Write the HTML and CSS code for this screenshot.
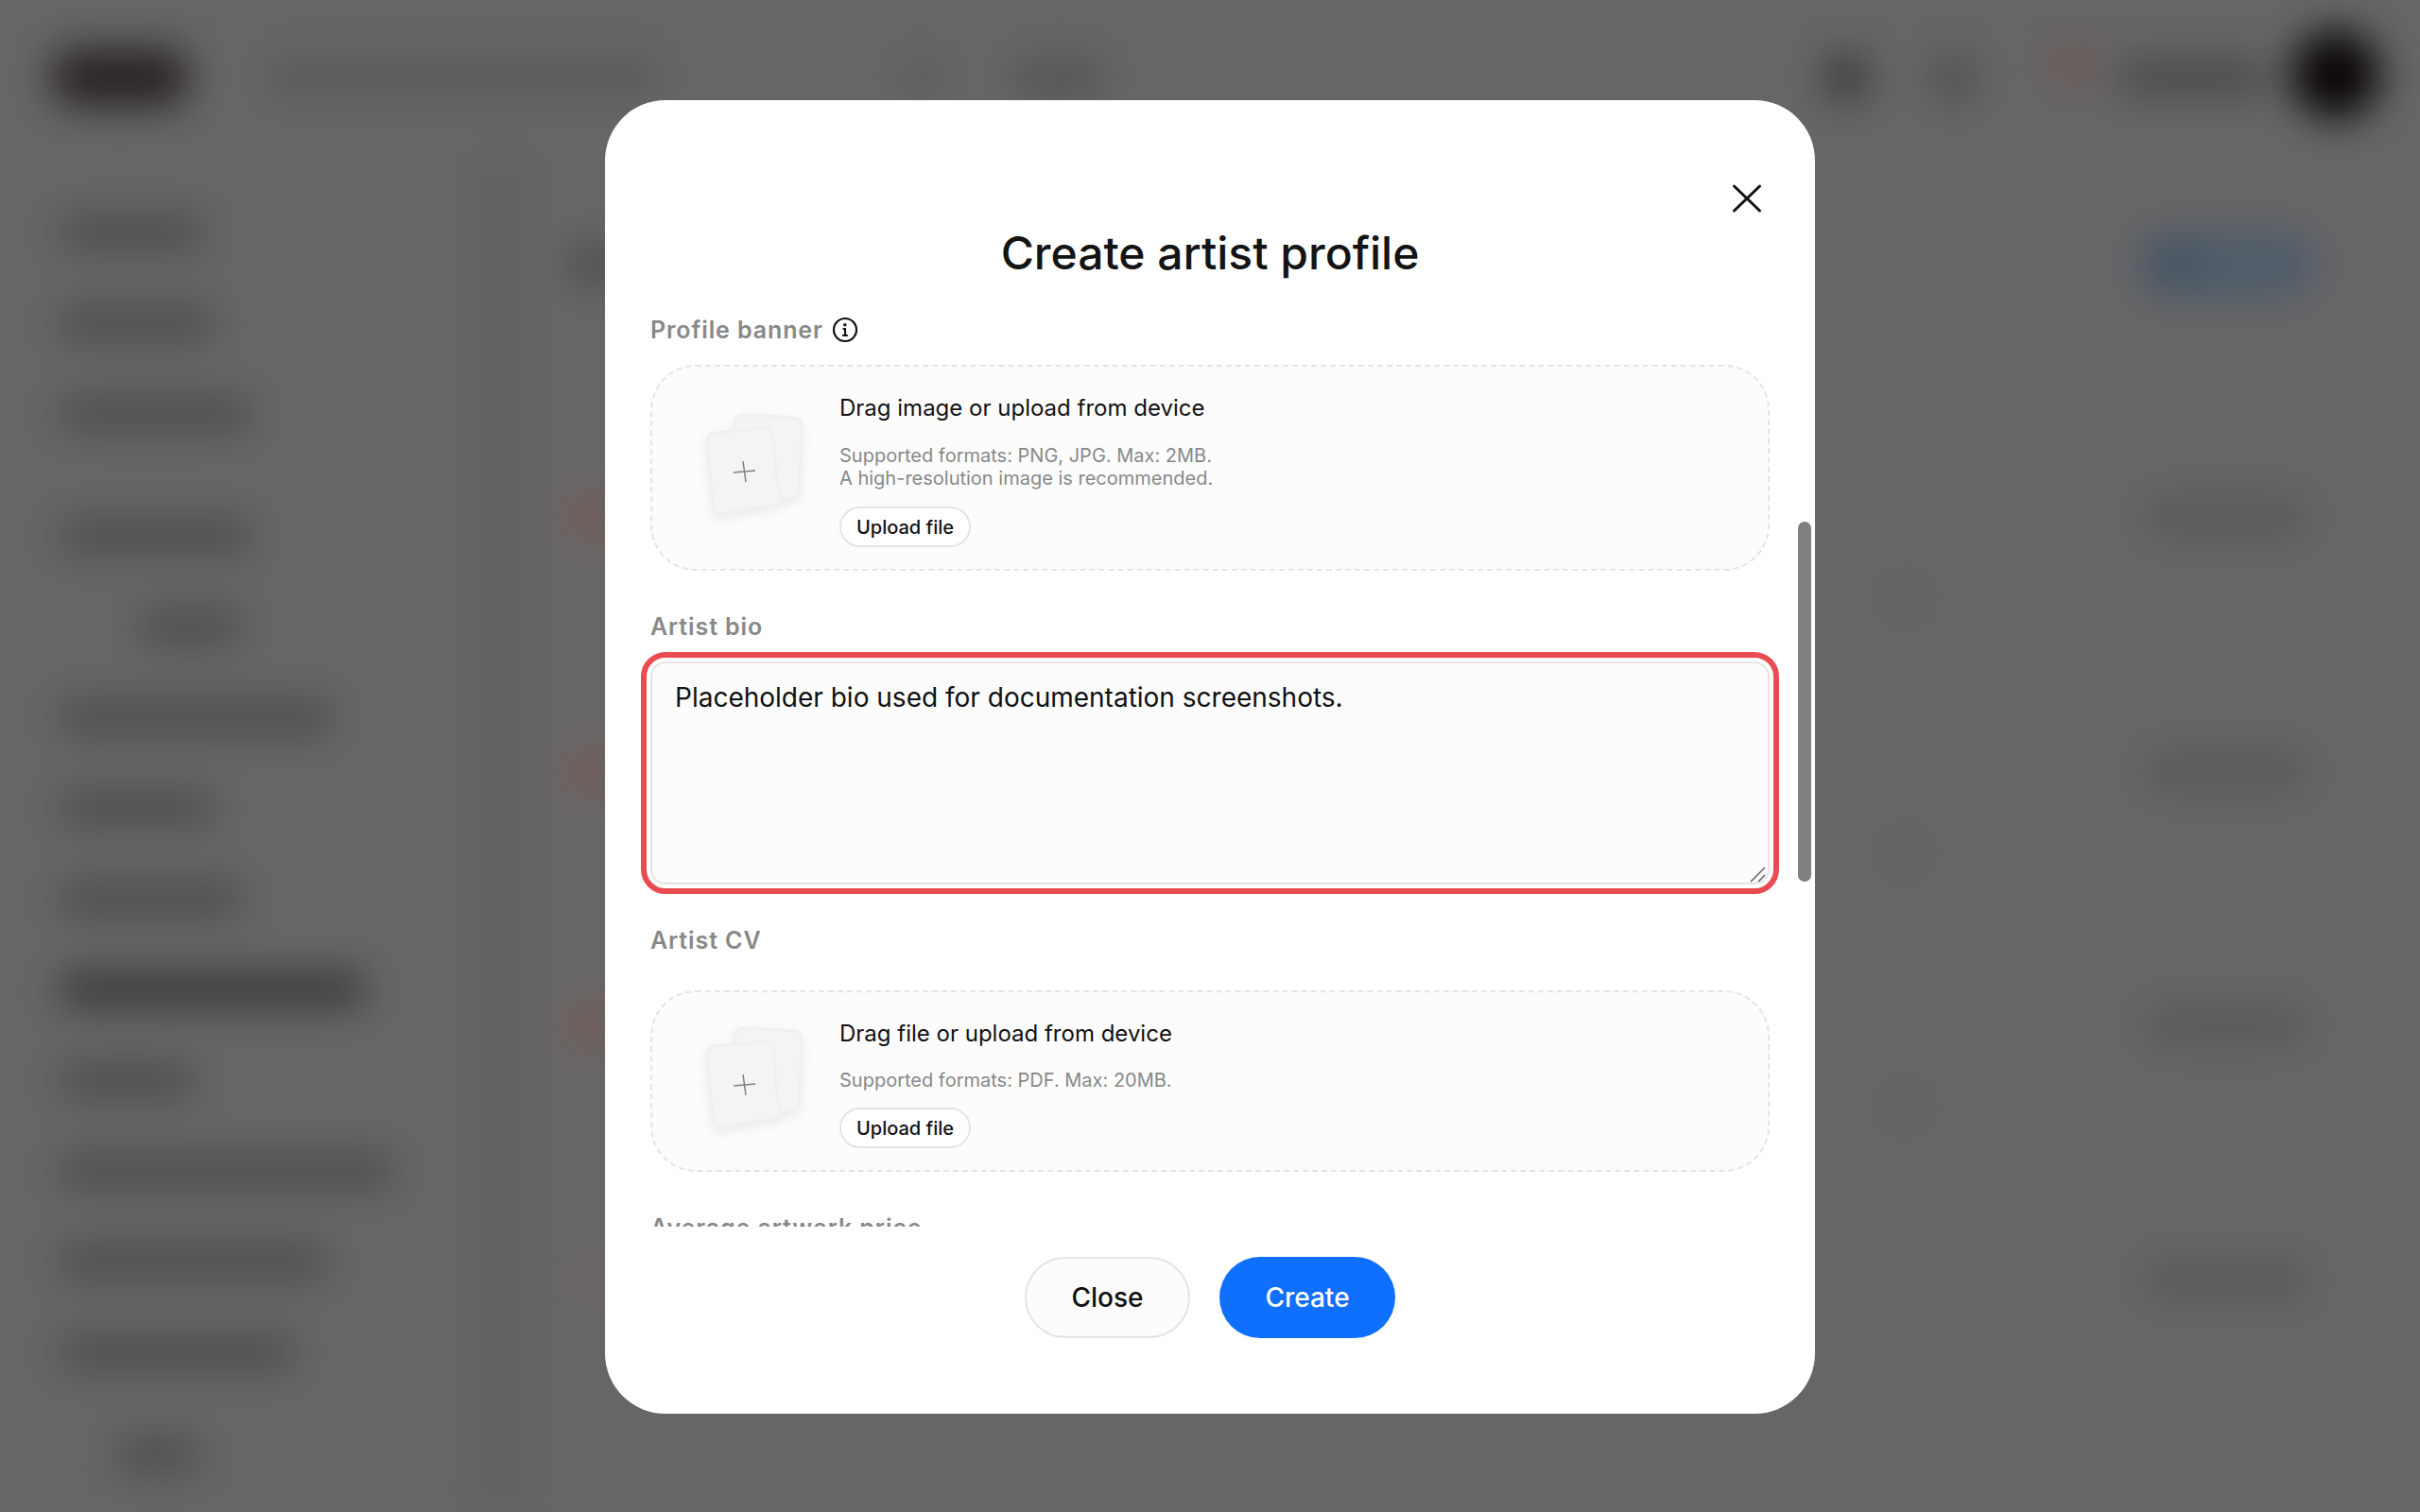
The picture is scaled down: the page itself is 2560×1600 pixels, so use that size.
FILE: index.html
```html
<!DOCTYPE html>
<html>
<head>
    <meta name="viewport" content="width=device-width, initial-scale=1">
    <title>Create artist profile</title>
    <link rel="stylesheet" href="styles.css">
</head>
<body>
    <!-- Page behind the modal, blurred -->
    <div class="app">
        <div class="topbar">
            <div class="logo"></div>
            <div class="search"></div>
            <div class="top-link"></div>
            <div class="top-link dark"></div>
            <div class="top-right">
                <div class="top-icon"></div>
                <div class="top-icon faint"></div>
                <div class="top-icon red"></div>
                <div class="top-name"></div>
                <div class="avatar"></div>
            </div>
        </div>
        <div class="columns">
            <div class="sidebar">
                <div class="nav-item w155"></div>
                <div class="nav-item w165"></div>
                <div class="nav-item w210"></div>
                <div class="nav-item w210 group"></div>
                <div class="nav-item w180 indent"></div>
                <div class="nav-item w295"></div>
                <div class="nav-item w165"></div>
                <div class="nav-item w195"></div>
                <div class="nav-item w315 selected"></div>
                <div class="nav-item w145"></div>
                <div class="nav-item w360"></div>
                <div class="nav-item w290"></div>
                <div class="nav-item w255"></div>
                <div class="nav-item w90 footer-item"></div>
            </div>
            <div class="divider"></div>
            <div class="main">
                <div class="main-head">
                    <div class="main-title"></div>
                    <div class="main-button"><span class="main-button-icon"></span></div>
                </div>
                <div class="row"><div class="row-top"><div class="row-pic"></div><div class="row-pill"></div></div><div class="row-dot"></div></div>
                <div class="row"><div class="row-top"><div class="row-pic"></div><div class="row-pill"></div></div><div class="row-dot"></div></div>
                <div class="row"><div class="row-top"><div class="row-pic"></div><div class="row-pill"></div></div><div class="row-dot"></div></div>
                <div class="row"><div class="row-top"><div class="row-pic faint"></div><div class="row-pill"></div></div></div>
            </div>
        </div>
    </div>

    <div class="overlay">
        <div class="modal">
            <button class="close-x" aria-label="Close">
                <svg width="40" height="40" viewBox="0 0 40 40" fill="none" stroke="#111" stroke-width="3" stroke-linecap="round">
                    <path d="M6.5 7 L33.5 33"/>
                    <path d="M33.5 7 L6.5 33"/>
                </svg>
            </button>
            <h1 class="modal-title">Create artist profile</h1>

            <div class="modal-body">
                <div class="scrollbar-thumb"></div>

                <div class="label">
                    Profile banner
                    <svg class="info" width="28" height="28" viewBox="0 0 28 28" fill="none" stroke="#111" stroke-width="2.2" stroke-linecap="round">
                        <circle cx="14" cy="14" r="12"/>
                        <path d="M14 13v7"/>
                        <path d="M12.4 13H14"/>
                        <path d="M12 20h4"/>
                        <circle cx="13.8" cy="8.8" r="0.7"/>
                    </svg>
                </div>
                <div class="dropzone">
                    <svg class="sheets" width="116" height="128" viewBox="0 0 116 128">
                        <path class="sheet" d="M37 15 Q38 8 46 8 L70 9 L100 11 Q108 12 108 20 L107 50 L105 88 Q104 96 96 96 L60 100 L42 60 Z"/>
                        <path class="sheet" d="M8 35 Q8 28 16 27 L40 25 L69 22 Q77 22 78 30 L80 52 L81 72 L86 96 Q86 103 78 104 L52 107 L24 113 Q16 114 15 106 L12 80 L10 60 Z"/>
                        <path class="plus" d="M36 69 L59 67 M46 57 L49 79"/>
                    </svg>
                    <div class="drop-text">
                        <div class="drop-title">Drag image or upload from device</div>
                        <div class="drop-note">Supported formats: PNG, JPG. Max: 2MB.<br>A high-resolution image is recommended.</div>
                        <button class="upload-btn">Upload file</button>
                    </div>
                </div>

                <div class="label">Artist bio</div>
                <div class="bio-wrap">
                    <textarea class="bio">Placeholder bio used for documentation screenshots.</textarea>
                    <svg class="grip" width="20" height="20" viewBox="0 0 20 20" fill="none" stroke="#666" stroke-width="1.6">
                        <path d="M3 19 L18 4"/>
                        <path d="M11 19 L18 12"/>
                    </svg>
                </div>

                <div class="label label-cv">Artist CV</div>
                <div class="dropzone">
                    <svg class="sheets" width="116" height="128" viewBox="0 0 116 128">
                        <path class="sheet" d="M37 15 Q38 8 46 8 L70 9 L100 11 Q108 12 108 20 L107 50 L105 88 Q104 96 96 96 L60 100 L42 60 Z"/>
                        <path class="sheet" d="M8 35 Q8 28 16 27 L40 25 L69 22 Q77 22 78 30 L80 52 L81 72 L86 96 Q86 103 78 104 L52 107 L24 113 Q16 114 15 106 L12 80 L10 60 Z"/>
                        <path class="plus" d="M36 69 L59 67 M46 57 L49 79"/>
                    </svg>
                    <div class="drop-text">
                        <div class="drop-title">Drag file or upload from device</div>
                        <div class="drop-note single">Supported formats: PDF. Max: 20MB.</div>
                        <button class="upload-btn">Upload file</button>
                    </div>
                </div>

                <div class="label">Average artwork price</div>
            </div>

            <div class="modal-footer">
                <button class="btn btn-close">Close</button>
                <button class="btn btn-create">Create</button>
            </div>
        </div>
    </div>
</body>
</html>
```
FILE: styles.css
```css
* {
    box-sizing: border-box;
}

html, body {
    margin: 0;
    height: 100%;
}

body {
    width: 2560px;
    height: 1600px;
    overflow: hidden;
    position: relative;
    background: #666;
    font-family: "Inter", "Liberation Sans", sans-serif;
    color: #111;
}

/* Blurred page behind the modal */
.app {
    width: 2560px;
    height: 1600px;
    background: #666;
    filter: blur(21px);
}

.topbar {
    display: flex;
    align-items: center;
    height: 164px;
    padding: 0 42px 0 52px;
}

.logo {
    width: 150px;
    height: 62px;
    border-radius: 31px;
    background: #2a2424;
}

.search {
    width: 420px;
    height: 40px;
    margin-left: 78px;
    border-radius: 20px;
    background: #5a5a5a;
}

.top-link {
    width: 50px;
    height: 30px;
    margin-left: 250px;
    border-radius: 15px;
    background: #5a5a5a;
}

.top-link.dark {
    width: 100px;
    margin-left: 70px;
    background: #505050;
}

.top-right {
    display: flex;
    align-items: center;
    margin-left: auto;
}

.top-icon {
    width: 54px;
    height: 54px;
    border-radius: 50%;
    margin-right: 60px;
    background: #3e3e3e;
}

.top-icon.faint {
    margin-right: 73px;
    background: #525252;
}

.top-icon.red {
    margin-right: 19px;
    margin-bottom: 30px;
    background: #6a5b57;
}

.top-name {
    width: 160px;
    height: 36px;
    margin-right: 24px;
    border-radius: 18px;
    background: #484848;
}

.avatar {
    width: 94px;
    height: 94px;
    border-radius: 50%;
    margin-bottom: 6px;
    background: #0c0808;
}

.columns {
    display: flex;
    height: 1436px;
}

.sidebar {
    display: flex;
    flex-direction: column;
    gap: 60px;
    width: 502px;
    padding: 64px 0 0 62px;
    flex-shrink: 0;
}

.divider {
    width: 57px;
    background: #626262;
    flex-shrink: 0;
}

.nav-item {
    height: 36px;
    border-radius: 18px;
    background: #4c4c4c;
}

.nav-item.group {
    margin-top: 33px;
}

.nav-item.indent {
    margin-left: 84px;
}

.nav-item.selected {
    background: #3a3636;
}

.nav-item.footer-item {
    margin-top: 12px;
    margin-left: 60px;
}

.w90 { width: 90px; }
.w145 { width: 145px; }
.w155 { width: 155px; }
.w165 { width: 165px; }
.w180 { width: 110px; }
.w195 { width: 195px; }
.w210 { width: 205px; }
.w255 { width: 250px; }
.w290 { width: 285px; }
.w295 { width: 290px; }
.w315 { width: 325px; }
.w360 { width: 355px; }

.main {
    flex: 1;
    padding: 86px 110px 0 41px;
}

.main-head {
    display: flex;
    justify-content: space-between;
    align-items: center;
    height: 60px;
}

.main-title {
    width: 60px;
    height: 44px;
    border-radius: 22px;
    background: #4e4e4e;
}

.main-button {
    display: flex;
    align-items: center;
    width: 190px;
    height: 70px;
    padding-left: 20px;
    border-radius: 35px;
    background: #4f5c6a;
}

.main-button-icon {
    width: 46px;
    height: 46px;
    border-radius: 50%;
    background: #42505e;
}

.row {
    margin-top: 207px;
    height: 62px;
}

.row:first-of-type {
    margin-top: 0;
}

.row-top {
    display: flex;
    justify-content: space-between;
    align-items: center;
}

.row-pic {
    width: 60px;
    height: 60px;
    border-radius: 50%;
    background: #735f59;
}

.row-pic.faint {
    background: #6a6462;
}

.row-pill {
    width: 170px;
    height: 40px;
    margin-right: 10px;
    border-radius: 20px;
    background: #585858;
}

.row-dot {
    width: 32px;
    height: 32px;
    margin: 40px 0 0 1400px;
    border-radius: 50%;
    background: #5e5e5e;
}

/* Modal */
.overlay {
    position: absolute;
    inset: 0;
    display: flex;
    justify-content: center;
    padding-top: 106px;
}

.modal {
    position: relative;
    display: flex;
    flex-direction: column;
    width: 1280px;
    height: 1390px;
    border-radius: 64px;
    background: #fff;
}

.close-x {
    position: absolute;
    top: 84px;
    right: 52px;
    width: 40px;
    height: 40px;
    padding: 0;
    border: 0;
    background: none;
}

.close-x svg {
    display: block;
}

.modal-title {
    margin: 130px 0 0;
    font-size: 48px;
    line-height: 64px;
    font-weight: 500;
    text-align: center;
    color: #141414;
}

.modal-body {
    position: relative;
    flex: 1;
    overflow: hidden;
    padding: 31px 48px 0;
    height: 0;
}

.scrollbar-thumb {
    position: absolute;
    top: 252px;
    right: 4px;
    width: 14px;
    height: 381px;
    border-radius: 7px;
    background: #808080;
}

.label {
    display: flex;
    align-items: center;
    gap: 9px;
    height: 36px;
    margin-bottom: 19px;
    font-size: 25px;
    font-weight: 600;
    letter-spacing: 0.9px;
    color: #888;
}

.label-cv {
    margin-bottom: 35px;
}

.info {
    display: block;
}

.dropzone {
    display: flex;
    align-items: center;
    gap: 32px;
    margin-bottom: 41px;
    padding: 26px 0 23px 50px;
    border: 2px dashed #e4e4e4;
    border-radius: 48px;
    background: #fcfcfc;
}

.sheets {
    flex-shrink: 0;
    display: block;
    overflow: visible;
    margin-bottom: 4px;
    filter: drop-shadow(0 4px 6px rgba(0, 0, 0, 0.07));
}

.sheet {
    fill: #f4f4f4;
    stroke: #f0f0f0;
    stroke-width: 3;
    stroke-linejoin: round;
}

.plus {
    fill: none;
    stroke: #808080;
    stroke-width: 1.5;
}

.drop-title {
    font-size: 24px;
    line-height: 36px;
    font-weight: 400;
    color: #111;
}

.drop-note {
    margin-top: 20px;
    font-size: 20px;
    line-height: 24px;
    color: #888;
}

.drop-note.single {
    line-height: 22px;
}

.upload-btn {
    display: block;
    height: 43px;
    margin-top: 18px;
    padding: 0 16px;
    border: 2px solid #e4e4e4;
    border-radius: 22px;
    background: #fff;
    font-family: inherit;
    font-size: 20px;
    font-weight: 500;
    color: #111;
}

.bio-wrap {
    position: relative;
    height: 236px;
    margin-bottom: 41px;
    margin-top: 0;
    border-radius: 16px;
    outline: 6px solid #e94b51;
    outline-offset: 4px;
}

.bio {
    display: block;
    width: 100%;
    height: 100%;
    padding: 16px 24px;
    border: 2px solid #e4e4e4;
    border-radius: 16px;
    background: #fcfcfc;
    font-family: inherit;
    font-size: 28px;
    line-height: 40px;
    color: #111;
    resize: none;
    outline: none;
}

.grip {
    position: absolute;
    right: 3px;
    bottom: 2px;
}

.modal-footer {
    display: flex;
    justify-content: center;
    gap: 31px;
    height: 198px;
    padding-top: 32px;
    flex-shrink: 0;
}

.btn {
    height: 86px;
    border-radius: 43px;
    font-family: inherit;
    font-size: 28px;
    font-weight: 500;
}

.btn-close {
    width: 175px;
    border: 2px solid #e4e4e4;
    background: #fcfcfc;
    color: #111;
}

.btn-create {
    width: 186px;
    border: 0;
    background: #0f6fff;
    color: #fff;
}
```
